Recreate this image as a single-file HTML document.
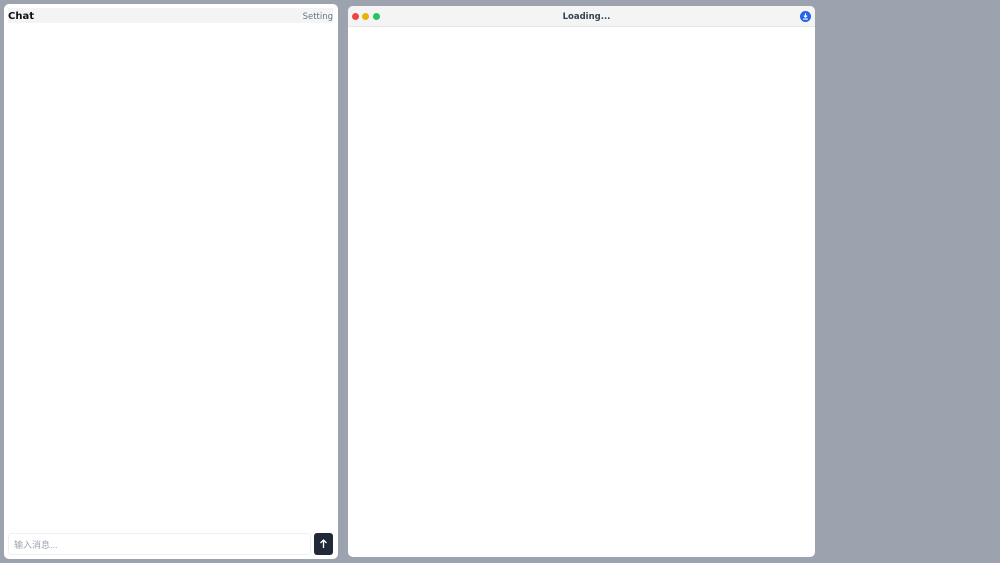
<!DOCTYPE html>
<html><head><meta charset="utf-8"><style>
*{box-sizing:border-box;margin:0;padding:0}
body{width:1000px;height:563px;background:#9ca3af;position:relative;overflow:hidden;font-family:"Liberation Sans","DejaVu Sans","Noto Sans CJK SC",sans-serif}
.left{position:absolute;left:4px;top:4px;width:334px;height:555px;background:#fff;border-radius:5px}
.hdr{position:absolute;left:4px;top:4px;width:325px;height:15px;background:#f3f4f6}
.hdr b{position:absolute;left:0;top:3px;font-size:10px;color:#111;font-family:"DejaVu Sans",sans-serif}
.hdr span{position:absolute;right:0;top:4px;font-size:8.5px;color:#6b7280;font-family:"DejaVu Sans",sans-serif}
.inp{position:absolute;left:4px;top:529px;width:303px;height:22px;border:1px solid #eef0f2;border-radius:3px;font-size:9px;color:#9ca3af;padding:4px 0 0 5px}
.btn{position:absolute;left:310px;top:529px;width:19px;height:22px;background:#1f2937;border-radius:3px}
.right{position:absolute;left:348px;top:6px;width:467px;height:551px;background:#fff;border-radius:5px;overflow:hidden}
.rh{height:21px;background:#f4f4f5;border-bottom:1px solid #e5e7eb;position:relative}
.dot{position:absolute;top:7px;width:7px;height:7px;border-radius:50%}
.rh .t{position:absolute;left:10px;right:0;top:6px;text-align:center;font-size:8.5px;font-weight:bold;color:#374151;font-family:"DejaVu Sans",sans-serif}
</style></head><body>
<div class="left">
<div class="hdr"><b>Chat</b><span>Setting</span></div>
<div class="inp">输入消息...</div>
<div class="btn"><svg width="19" height="22" viewBox="0 0 19 22"><path d="M9.5 15V7M6.5 10l3-3 3 3" stroke="#fff" stroke-width="1.3" fill="none"/></svg></div>
</div>
<div class="right">
<div class="rh">
<div class="dot" style="left:4px;background:#ef4444"></div>
<div class="dot" style="left:14px;background:#eab308"></div>
<div class="dot" style="left:25px;background:#22c55e"></div>
<div class="t">Loading...</div>
<svg style="position:absolute;left:452px;top:5px" width="11" height="11" viewBox="0 0 10 10"><circle cx="5" cy="5" r="5" fill="#2563eb"/><path d="M5 2v3.5M3.5 4.2L5 5.7 6.5 4.2M2.8 7.3h4.4" stroke="#fff" stroke-width="1" fill="none"/></svg>
</div>
</div>
</body></html>
